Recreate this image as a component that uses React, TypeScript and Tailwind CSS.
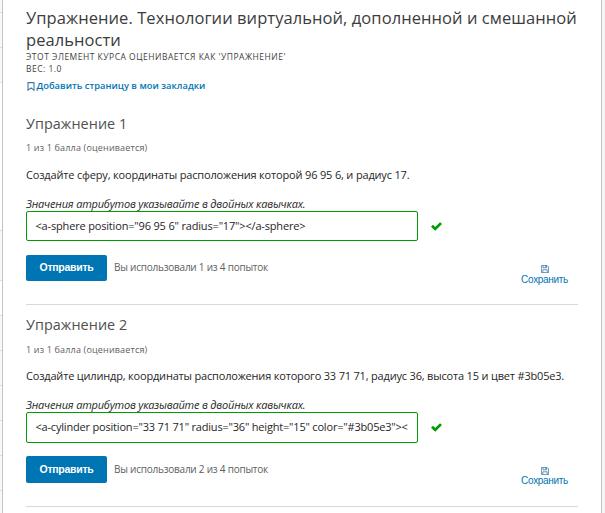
import React from 'react';

const sideRows = [
  { h: 13, cls: 'bg-[#f8f8f8]' },
  { h: 35, cls: 'bg-[#f8f8f8]' },
  { h: 35, cls: 'bg-[#f8f8f8]' },
  { h: 148, cls: 'bg-white' },
  { h: 50, cls: 'bg-[#f8f8f8]' },
  { h: 35, cls: 'bg-white' },
  { h: 35, cls: 'bg-[#f8f8f8]' },
  { h: 35, cls: 'bg-[#f8f8f8]' },
  { h: 35, cls: 'bg-[#f8f8f8]' },
  { h: 35, cls: 'bg-[#f8f8f8]' },
  { h: 35, cls: 'bg-[#f8f8f8]' },
];

function Bookmark() {
  return (
    <svg width="8" height="9" viewBox="0 0 8 9" fill="none" stroke="#3f78a8" strokeWidth="1.1" className="shrink-0">
      <path d="M1 .6h6v7.6L4 5.9 1 8.2z" />
    </svg>
  );
}

function Check() {
  return (
    <svg width="11" height="9" viewBox="0 0 11 9" className="block shrink-0">
      <path d="M0 4.7 2 2.8 4.2 4.9 9 .2 11 2.1 4.2 8.8z" fill="#009b00" />
    </svg>
  );
}

function Floppy() {
  return (
    <svg width="8" height="8" viewBox="0 0 8 8" fill="none" stroke="#3f78a8" strokeWidth=".8" className="block">
      <path d="M.4.4h5.7l1.5 1.5v5.7H.4zM2 .6v2.2h3.6V.6M1.8 7.4V4.8h4.4v2.6" />
      <path d="M4.6.7v1.6" />
    </svg>
  );
}

type ProblemProps = {
  title: string;
  text: string;
  textClass: string;
  answer: string;
  answerClass: string;
  used: string;
  tall?: boolean;
};

function Problem({ title, text, textClass, answer, answerClass, used, tall }: ProblemProps) {
  return (
    <section className={`border-b border-[#d9d9d9] ${tall ? 'h-[202px] pt-px' : 'h-[200px]'}`}>
      <h3 className="h-5 pt-[9px] text-[14.4px] leading-5 tracking-[0.05px] text-[#505050]">{title}</h3>
      <p className={`h-3 text-[9px] leading-3 tracking-[0.17px] text-[#5e5e5e] ${tall ? 'mt-[18px]' : 'mt-[17px]'}`}>1 из 1 балла (оценивается)</p>
      <p className={`h-4 text-[11px] leading-4 text-[#262626] ${textClass} ${tall ? 'mt-3' : 'mt-[13px]'}`}>{text}</p>
      <p className="mt-[13px] h-[15px] text-[11px] italic leading-4 tracking-[-0.19px] text-[#262626]">Значения атрибутов указывайте в двойных кавычках.</p>
      <div className="flex items-center">
        <div className={`w-[392px] rounded-[2px] border border-[#009b00] pl-[8.5px] ${tall ? 'h-[31px]' : 'h-[30px]'}`}>
          <div className={`text-[11px] leading-7 text-[#262626] ${answerClass}`}>{answer}</div>
        </div>
        <div className="ml-[13px]"><Check /></div>
      </div>
      <div className={`flex ${tall ? 'mt-[13px]' : 'mt-3.5'}`}>
        <button className={`w-[81px] rounded-[2px] bg-[#0075b4] font-['Liberation_Sans',sans-serif] text-[10.5px] font-bold tracking-[-0.28px] text-white ${tall ? 'h-[27px]' : 'h-[26px]'}`}>Отправить</button>
        <span className={`ml-[7px] text-[10px] tracking-[-0.23px] text-[#5e5e5e] ${tall ? 'leading-[27px]' : 'leading-[25px]'}`}>{used}</span>
        <div className={`ml-auto mr-2.5 flex flex-col items-center font-['Liberation_Sans',sans-serif] text-[10px] tracking-[-0.31px] text-[#0075b4] ${tall ? 'mt-[11px]' : 'mt-2.5'}`}>
          <Floppy />
          <span className={`leading-3 ${tall ? '' : 'mt-px'}`}>Сохранить</span>
        </div>
      </div>
    </section>
  );
}

export default function App() {
  return (
    <div className="flex h-[513px] w-[605px] overflow-hidden bg-[#f5f5f5] font-['Open_Sans',sans-serif]">
      <aside className="w-0.5 shrink-0 bg-[#f8f8f8]">
        {sideRows.map(({ h, cls }, i) => <div key={i} className={`border-b border-[#dedede] ${cls}`} style={{ height: h }} />)}
      </aside>
      <main className="w-[600px] shrink-0 overflow-hidden whitespace-nowrap border-x border-[#c4c4c4] bg-white px-[23px]">
        <h2 className="pt-[7px] text-[16.5px] font-medium leading-[22px] tracking-[0.07px] text-[#3c3c3c]">
          Упражнение. Технологии виртуальной, дополненной и смешанной<br />реальности
        </h2>
        <p className="text-[8.5px] leading-[12px] tracking-[0.5px] text-[#414141]">ЭТОТ ЭЛЕМЕНТ КУРСА ОЦЕНИВАЕТСЯ КАК 'УПРАЖНЕНИЕ'<br />ВЕС: 1.0</p>
        <div className="mb-[11px] mt-[3px] flex h-4 items-center gap-[1.5px] pl-px text-[9.3px] font-semibold tracking-[0.02px] text-[#0075b4]">
          <Bookmark /><span>Добавить страницу в мои закладки</span>
        </div>
        <Problem title="Упражнение 1" text="Создайте сферу, координаты расположения которой 96 95 6, и радиус 17." textClass="tracking-[-0.17px]" answer={'<a-sphere position="96 95 6" radius="17"></a-sphere>'} answerClass="tracking-[-0.17px]" used="Вы использовали 1 из 4 попыток" />
        <Problem title="Упражнение 2" text="Создайте цилиндр, координаты расположения которого 33 71 71, радиус 36, высота 15 и цвет #3b05e3." textClass="tracking-[-0.185px]" answer={'<a-cylinder position="33 71 71" radius="36" height="15" color="#3b05e3"><'} answerClass="tracking-[-0.19px]" used="Вы использовали 2 из 4 попыток" tall />
      </main>
    </div>
  );
}
